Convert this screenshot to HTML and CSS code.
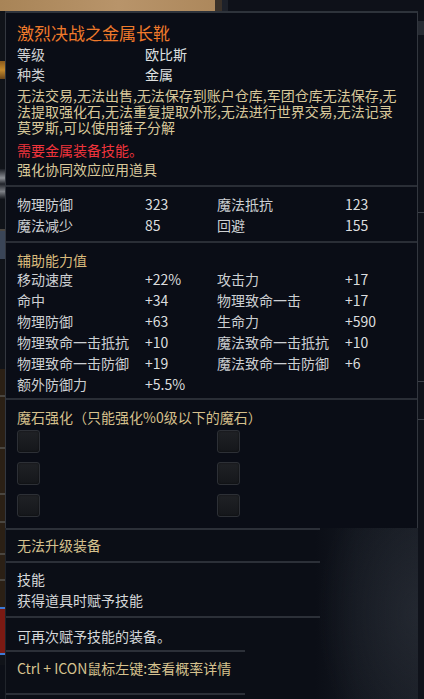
FILE: index.html
```html
<!DOCTYPE html>
<html lang="zh-CN">
<head>
<meta charset="utf-8">
<title>激烈决战之金属长靴</title>
<link rel="stylesheet" href="styles.css">
</head>
<body>
<div class="top-strip">
  <div class="ts-tan"></div>
  <div class="ts-dk"></div>
  <div class="ts-gr"></div>
  <div class="ts-navy"></div>
</div>
<div class="main">
  <div class="left-strip">
    <div class="ls ls-dark h50"></div>
    <div class="ls ls-gold h18"></div>
    <div class="ls ls-dark h90"></div>
    <div class="ls ls-text h30"></div>
    <div class="ls ls-dark h30"></div>
    <div class="ls ls-line"></div>
    <div class="ls ls-blue h28"></div>
    <div class="ls ls-dark h110"></div>
    <div class="ls ls-brown h26"></div>
    <div class="ls ls-line"></div>
    <div class="ls ls-brown h50"></div>
    <div class="ls ls-line"></div>
    <div class="ls ls-brown h44"></div>
    <div class="ls ls-line"></div>
    <div class="ls ls-brown h26"></div>
    <div class="ls ls-line"></div>
    <div class="ls ls-brown h30"></div>
    <div class="ls ls-line"></div>
    <div class="ls ls-brown h24"></div>
    <div class="ls ls-line"></div>
    <div class="ls ls-brown h26"></div>
    <div class="ls ls-tick"></div>
    <div class="ls ls-red h44"></div>
    <div class="ls ls-tick"></div>
    <div class="ls ls-dark h10"></div>
  </div>

  <div class="tooltip">
    <div class="panel">
      <section class="sec sec-info">
        <h1 class="title">激烈决战之金属长靴</h1>
        <div class="kv"><span class="k">等级</span><span class="v">欧比斯</span></div>
        <div class="kv"><span class="k">种类</span><span class="v">金属</span></div>
        <div class="desc">
          <p>无法交易,无法出售,无法保存到账户仓库,军团仓库无法保存,无</p>
          <p>法提取强化石,无法重复提取外形,无法进行世界交易,无法记录</p>
          <p>莫罗斯,可以使用锤子分解</p>
        </div>
        <p class="warn">需要金属装备技能。</p>
        <p class="note">强化协同效应应用道具</p>
      </section>

      <section class="sec sec-base">
        <div class="grid">
          <span class="k">物理防御</span><span class="v">323</span><span class="k">魔法抵抗</span><span class="v">123</span>
          <span class="k">魔法减少</span><span class="v">85</span><span class="k">回避</span><span class="v">155</span>
        </div>
      </section>

      <section class="sec sec-bonus">
        <h2 class="head">辅助能力值</h2>
        <div class="grid">
          <span class="k">移动速度</span><span class="v">+22%</span><span class="k">攻击力</span><span class="v">+17</span>
          <span class="k">命中</span><span class="v">+34</span><span class="k">物理致命一击</span><span class="v">+17</span>
          <span class="k">物理防御</span><span class="v">+63</span><span class="k">生命力</span><span class="v">+590</span>
          <span class="k">物理致命一击抵抗</span><span class="v">+10</span><span class="k">魔法致命一击抵抗</span><span class="v">+10</span>
          <span class="k">物理致命一击防御</span><span class="v">+19</span><span class="k">魔法致命一击防御</span><span class="v">+6</span>
          <span class="k">额外防御力</span><span class="v">+5.5%</span><span></span><span></span>
        </div>
      </section>

      <section class="sec sec-stone">
        <h2 class="head head-stone">魔石强化（只能强化%0级以下的魔石）</h2>
        <div class="slots">
          <span class="slot"></span><span class="slot"></span>
          <span class="slot"></span><span class="slot"></span>
          <span class="slot"></span><span class="slot"></span>
        </div>
      </section>
    </div>

    <div class="lower">
      <div class="sep sep-wide"></div>
      <div class="item item-upgrade"><p class="tan">无法升级装备</p></div>
      <div class="sep sep-wide"></div>
      <div class="item item-skill"><p class="white">技能</p><p class="white">获得道具时赋予技能</p></div>
      <div class="sep sep-wide"></div>
      <div class="item item-again"><p class="white">可再次赋予技能的装备。</p></div>
      <div class="sep sep-narrow"></div>
      <div class="item item-ctrl"><p class="tan">Ctrl + ICON鼠标左键:查看概率详情</p></div>
      <div class="sep sep-narrow"></div>
    </div>
  </div>

  <div class="right-strip">
    <div class="rs-block"></div>
    <div class="rs-line rs-l1"></div>
    <div class="rs-line rs-l2"></div>
    <div class="rs-line rs-l3"></div>
  </div>
</div>
</body>
</html>
```
FILE: styles.css
```css
* { box-sizing: border-box; }
html, body { margin: 0; padding: 0; }
body {
  width: 424px;
  height: 699px;
  overflow: hidden;
  background: #0c0f17;
  font-family: "Noto Sans CJK SC", "Noto Sans", sans-serif;
  font-size: 14px;
  color: #cdd0d3;
}
p, h1, h2 { margin: 0; font-weight: normal; }

/* top background strip */
.top-strip { display: flex; height: 11px; }
.ts-tan { width: 215px; background: linear-gradient(to right, #a88457, #b8946a 55%, #ad885c); }
.ts-dk { width: 7px; background: #3a3129; }
.ts-gr { width: 6px; background: #1d212a; }
.ts-navy { flex: 1; background: #0e1119; }

.main { display: flex; height: 688px; }

/* left background strip */
.left-strip { width: 5px; display: flex; flex-direction: column; overflow: hidden; }
.ls { flex: none; }
.ls-dark { background: #101319; }
.ls-gold { background: linear-gradient(#8a5a1c, #c58a2c, #6a4418); }
.ls-text { background: linear-gradient(#1a1d24, #8c8f95 30%, #20232a 50%, #7d8086 75%, #15181e); }
.ls-blue { background: #3a4557; }
.ls-brown { background: #2b2015; }
.ls-red { background: #7a1a13; }
.ls-line { height: 2px; background: #4a4640; }
.ls-tick { height: 2px; background: #3d7ad6; }
.h10 { height: 10px; } .h18 { height: 18px; } .h24 { height: 24px; } .h26 { height: 26px; }
.h28 { height: 28px; } .h30 { height: 30px; } .h44 { height: 44px; } .h50 { height: 50px; }
.h90 { height: 90px; } .h110 { height: 110px; }

/* tooltip */
.tooltip { width: 413px; display: flex; flex-direction: column; background: #0b0e16; }
.panel {
  border: 1px solid #33373f;
  border-top: 2px solid #2e333b;
  border-bottom: none;
  background: #0a0d16;
}
.sec { padding-left: 11px; padding-right: 8px; }
.sec + .sec { border-top: 2px solid #2a2e36; }

.sec-info { padding-top: 9px; padding-bottom: 6px; }
.title { font-size: 17px; line-height: 22px; color: #ef7a2b; }
.kv { display: flex; line-height: 20px; }
.kv .k { width: 128px; color: #cfd1d3; }
.kv .v { color: #dfe0e0; }
.desc { margin-top: 3px; color: #d8c89a; }
.desc p { height: 16px; line-height: 16px; white-space: nowrap; }
.warn { margin-top: 6px; line-height: 19px; color: #f0343c; }
.note { line-height: 19px; color: #d8c89a; }

.grid {
  display: grid;
  grid-template-columns: 128px 72px 128px 1fr;
  grid-auto-rows: 21px;
  line-height: 21px;
}
.grid .k { color: #cdd0d3; white-space: nowrap; }
.grid .v { color: #dcdedf; white-space: nowrap; }

.sec-base { padding-top: 6.5px; padding-bottom: 5px; }
.sec-bonus { padding-top: 8px; padding-bottom: 3px; }
.head { font-size: 14px; line-height: 18px; color: #d9ba7c; }
.sec-stone { padding-top: 7px; padding-bottom: 11px; }
.head-stone { line-height: 20px; color: #d6c08c; }

.slots {
  margin-top: 3px;
  display: grid;
  grid-template-columns: 200px 23px;
  grid-auto-rows: 23px;
  row-gap: 9px;
}
.slot {
  width: 23px;
  height: 23px;
  border-radius: 3px;
  border: 1px solid #2d3036;
  background: linear-gradient(#1f2125, #15171b);
  box-shadow: inset 0 0 2px rgba(0,0,0,0.6);
}

/* lower, narrower part */
.lower {
  flex: 1;
  border-left: 1px solid #20242b;
  background:
    radial-gradient(ellipse 100px 150px at 100% 50%, rgba(42,47,56,0.6), rgba(42,47,56,0) 100%),
    linear-gradient(to right, #0b0e16 0%, #0b0e16 75%, #12161e 85%, #181c24 100%);
}
.sep { height: 2px; background: #2c3038; }
.sep-wide { width: 314px; }
.sep-narrow { width: 239px; }
.item { padding-left: 11px; }
.item p { line-height: 20px; white-space: nowrap; }
.tan { color: #d6c28e; }
.white { color: #d5d7d9; }
.item-upgrade { padding-top: 5px; padding-bottom: 6px; }
.item-skill { padding-top: 6.5px; padding-bottom: 5px; }
.item-skill p { line-height: 21px; }
.item-again { padding-top: 7.5px; padding-bottom: 4px; }
.item-ctrl { padding-top: 6px; padding-bottom: 15px; }

/* right background strip */
.right-strip { flex: 1; background: #0f121a; display: flex; flex-direction: column; }
.rs-block { margin-top: 10px; height: 14px; background: #272b33; }
.rs-line { height: 1px; background: #3c4048; }
.rs-l1 { margin-top: 177px; }
.rs-l2 { margin-top: 168px; }
.rs-l3 { margin-top: 37px; }
```
